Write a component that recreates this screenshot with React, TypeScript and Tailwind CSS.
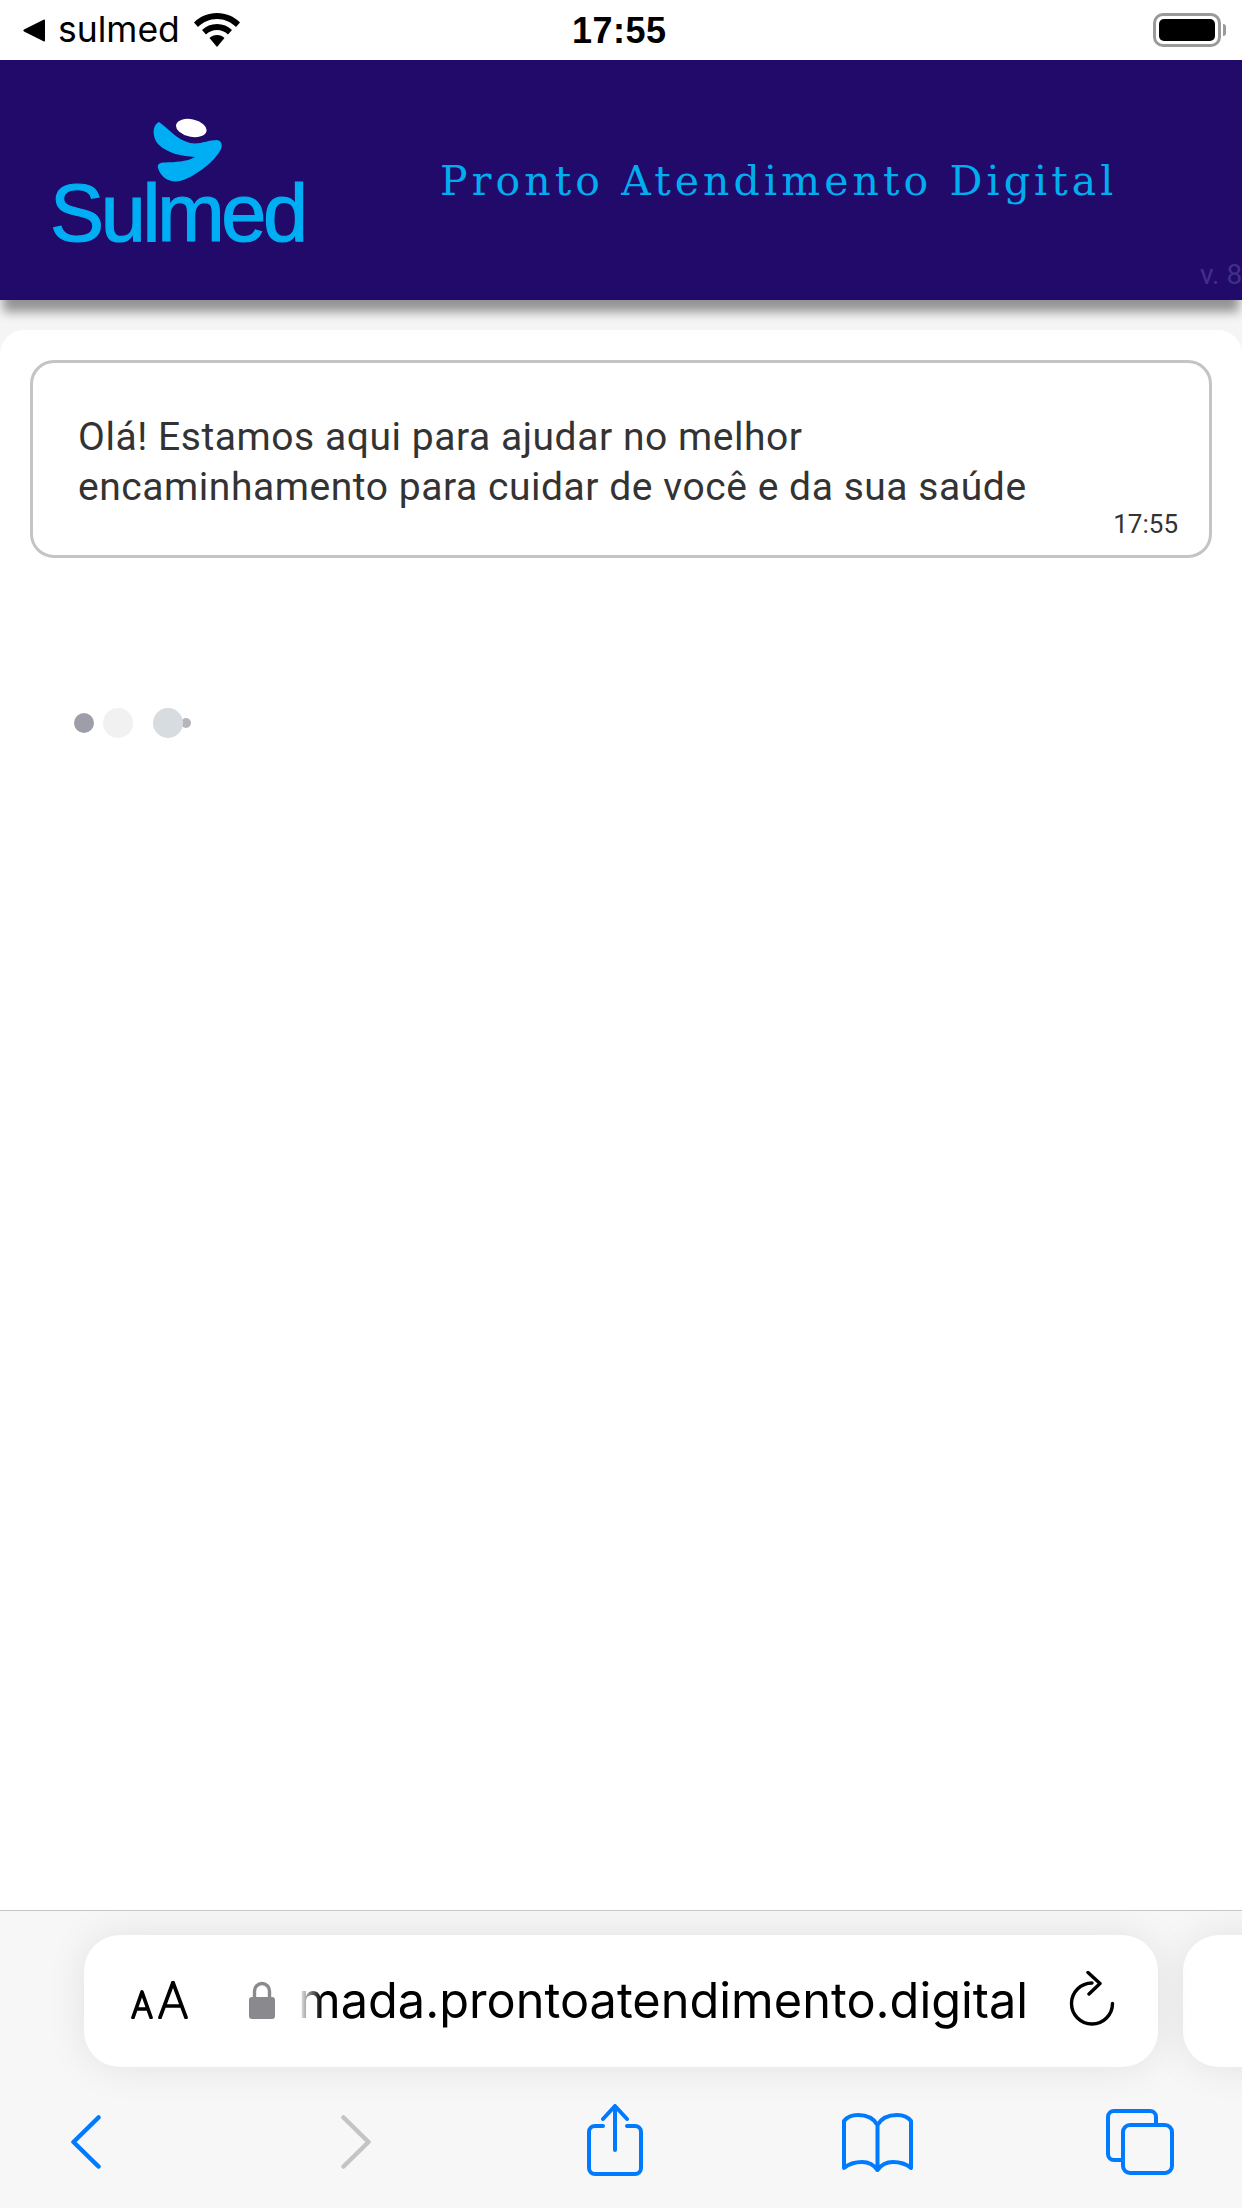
const sysFont = "font-['Inter','Liberation_Sans',sans-serif]";

function WifiIcon() {
  return (
    <svg width="48" height="34" viewBox="0 0 48 34" className="ml-[13px]">
      <path d="M24 0C15 0 7 3.500 1 9.500L5 14C10 9 16.500 6 24 6s14 3 19 8l4-4.500C41 3.500 33 0 24 0z" fill="#000" />
      <path d="M24 11c-6 0-11 2.300-15 6l4 4.500c3-2.800 6.800-4.500 11-4.500s8 1.700 11 4.500l4-4.500c-4-3.700-9-6-15-6z" fill="#000" />
      <path d="M24 22c-3 0-5.500 1.100-7.500 3L24 34l7.500-9c-2-1.900-4.500-3-7.500-3z" fill="#000" />
    </svg>
  );
}

function Battery() {
  return (
    <div className="flex items-center">
      <div className="w-[68px] h-[34px] rounded-[10px] border-[3px] border-[#9a9a9a] p-[3px]">
        <div className="w-full h-full rounded-[5px] bg-black" />
      </div>
      <div className="w-[3px] h-[12px] ml-[2px] rounded-r-full bg-[#9a9a9a]" />
    </div>
  );
}

function StatusBar() {
  return (
    <div className={`relative h-[60px] bg-white flex items-center justify-between pl-[23px] pr-[16px] text-black ${sysFont}`}>
      <div className="flex items-center">
        <svg width="23" height="23" viewBox="0 0 23 23">
          <path d="M22 1.500V21.500a1 1 0 0 1-1.500.8L1 12.500a1.100 1.100 0 0 1 0-2L20.500.700A1 1 0 0 1 22 1.500z" fill="#000" />
        </svg>
        <span className="ml-[12px] text-[35.500px] leading-[40px]">sulmed</span>
        <WifiIcon />
      </div>
      <span className="absolute left-[572px] top-[11px] text-[36px] leading-[40px] font-bold font-['Liberation_Sans',sans-serif] tracking-[0.5px]">17:55</span>
      <Battery />
    </div>
  );
}

function Logo() {
  return (
    <div className="relative w-[260px] h-[140px]">
      <svg width="90" height="75" viewBox="150 115 80 68" className="absolute left-[97px] top-[0px] w-[80px] h-[68px]">
        <path d="M159 120C170 128 176 137 190 141C200 143 208 138 217 138C222 139 222.500 143 221 147C216 158 197 174 180 179C170 181 161 176 158 166C157 162 160 160.500 165 160.500C176 160 186 160 195 155C182 154 168 152 158 142C152 135 152 123 159 120Z" fill="#00aef4" />
        <ellipse cx="191.300" cy="126" rx="15.500" ry="8.800" transform="rotate(12 191.300 126)" fill="#fff" />
      </svg>
      <span className="absolute left-[-3px] top-[50px] text-[81px] leading-[92px] tracking-[-3.300px] text-[#00aef4] [-webkit-text-stroke:1.200px_#00aef4] font-['Liberation_Sans',sans-serif]">
        Sulmed
      </span>
    </div>
  );
}

function Header() {
  return (
    <div className="relative z-10 h-[240px] bg-[#220a6b] shadow-[0_15px_10px_-3px_rgba(0,0,0,0.4)] flex items-start">
      <div className="ml-[53px] mt-[57px]">
        <Logo />
      </div>
      <h1 className="ml-[127px] mt-[96px] text-[41px] leading-[50px] tracking-[4.100px] text-[#00aeef] font-normal font-['DejaVu_Serif',serif] whitespace-nowrap">
        Pronto Atendimento Digital
      </h1>
      <span className="absolute left-[1200px] bottom-[10px] w-[42px] text-[28px] leading-[30px] text-[#41308a] font-['Roboto',sans-serif] overflow-hidden whitespace-nowrap">
        v. 8
      </span>
    </div>
  );
}

function Message() {
  return (
    <div className="mx-[30px] h-[198px] rounded-[24px] border-[3px] border-[#c4c4c4] bg-white pl-[45px] pr-[31px] pt-[49px] text-[#333] font-['Roboto',sans-serif]">
      <p className="text-[39px] leading-[50px] tracking-[0.55px] whitespace-nowrap">
        Olá! Estamos aqui para ajudar no melhor
        <br />
        encaminhamento para cuidar de você e da sua saúde
      </p>
      <div className="text-right text-[26px] leading-[30px] -mt-[3px]">17:55</div>
    </div>
  );
}

function TypingDots() {
  return (
    <div className="ml-[74px] mt-[150px] flex items-center">
      <div className="w-[20px] h-[20px] rounded-full bg-[#9e9ea8]" />
      <div className="ml-[9px] w-[30px] h-[30px] rounded-full bg-[#f1f1f1]" />
      <div className="relative z-10 ml-[20px] w-[30px] h-[30px] rounded-full bg-[#d6dcdf]" />
      <div className="-ml-[2px] w-[10px] h-[10px] rounded-full bg-[#b5b5ba]" />
    </div>
  );
}

function UrlBar() {
  return (
    <div className="pt-[24px] flex">
      <div className={`relative ml-[84px] w-[1074px] h-[132px] shrink-0 rounded-[36px] bg-white shadow-[0_0_40px_rgba(0,0,0,0.09)] flex items-center text-black ${sysFont}`}>
        <div className="ml-[47px] flex items-end h-[38px] mb-[2px] text-[#111]">
          <svg width="60" height="38" viewBox="0 0 60 38" fill="none" stroke="#000" strokeWidth="3.700" strokeLinecap="round" strokeLinejoin="round">
            <path d="M2 36.500L11 11L20 36.500M5 28H17" />
            <path d="M29 36.500L42 1.500L55 36.500M33.500 25H50.500" />
          </svg>
        </div>
        <svg width="26" height="38" viewBox="0 0 26 38" className="ml-[58px] mb-[2px]">
          <path d="M5.500 17V10a7.500 7.500 0 0 1 15 0v7" fill="none" stroke="#8a8a8e" strokeWidth="3.400" />
          <rect x="0" y="16" width="26" height="22" rx="3" fill="#8a8a8e" />
        </svg>
        <div className="relative ml-[23px] text-[48.700px] leading-[56px] whitespace-nowrap -mt-[1px]">
          mada.prontoatendimento.digital
          <div className="absolute left-0 top-0 bottom-0 w-[24px] bg-gradient-to-r from-white to-transparent" />
        </div>
        <svg width="46" height="56" viewBox="0 0 46 56" fill="none" stroke="#000" strokeWidth="3.400" strokeLinecap="round" strokeLinejoin="round" className="absolute right-[43px] top-[36px]">
          <path d="M23 12A20.500 20.500 0 1 0 43.500 32.500" />
          <path d="M19 1.500L31 12.500L20 23" />
        </svg>
      </div>
      <div className="ml-[25px] w-[120px] h-[132px] shrink-0 rounded-[36px] bg-white shadow-[0_0_40px_rgba(0,0,0,0.09)]" />
    </div>
  );
}

function Toolbar() {
  return (
    <div className="flex items-start pl-[71px] h-[72px] mt-[37px]">
      <svg width="30" height="54" viewBox="0 0 30 54" fill="none" stroke="#007aff" strokeWidth="4.500" strokeLinecap="round" strokeLinejoin="round" className="mt-[11px]">
        <path d="M27.500 2.500L2.500 27L27.500 51.500" />
      </svg>
      <svg width="30" height="54" viewBox="0 0 30 54" fill="none" stroke="#c4c4c4" strokeWidth="4.500" strokeLinecap="round" strokeLinejoin="round" className="ml-[240px] mt-[11px]">
        <path d="M2.500 2.500L27.500 27L2.500 51.500" />
      </svg>
      <svg width="56" height="72" viewBox="0 0 56 72" fill="none" stroke="#007aff" strokeWidth="4" strokeLinecap="round" strokeLinejoin="round" className="ml-[216px]">
        <path d="M16 22H8A6 6 0 0 0 2 28V64A6 6 0 0 0 8 70H48A6 6 0 0 0 54 64V28A6 6 0 0 0 48 22H40" />
        <path d="M28 46V3M16 15L28 2L40 15" />
      </svg>
      <svg width="71" height="60" viewBox="0 0 71 60" fill="none" stroke="#007aff" strokeWidth="4" strokeLinecap="round" strokeLinejoin="round" className="ml-[199px] mt-[9px]">
        <path d="M35.500 12C31 4 24 2 16 2C10 2 5 4 2 8V55C8 50 14 49 20 49C26 49 32 52 35.500 57C39 52 45 49 51 49C57 49 63 50 69 55V8C66 4 61 2 55 2C47 2 40 4 35.500 12ZM35.500 12V56" />
      </svg>
      <svg width="68" height="66" viewBox="0 0 68 66" fill="none" stroke="#007aff" strokeWidth="4" strokeLinecap="round" strokeLinejoin="round" className="ml-[193px] mt-[5px]">
        <path d="M17 51H8A6 6 0 0 1 2 45V8A6 6 0 0 1 8 2H44A6 6 0 0 1 50 8V16" />
        <rect x="17" y="16" width="49" height="48" rx="7" />
      </svg>
    </div>
  );
}

export default function App() {
  return (
    <div className="w-[1242px] h-[2208px] flex flex-col bg-[#f5f5f5] overflow-hidden">
      <StatusBar />
      <Header />
      <main className="mt-[30px] flex-1 rounded-t-[24px] bg-white pt-[30px]">
        <Message />
        <TypingDots />
      </main>
      <footer className="h-[298px] border-t-[1.500px] border-[#c6c6c8] bg-[#f7f7f7] overflow-hidden">
        <UrlBar />
        <Toolbar />
      </footer>
    </div>
  );
}
